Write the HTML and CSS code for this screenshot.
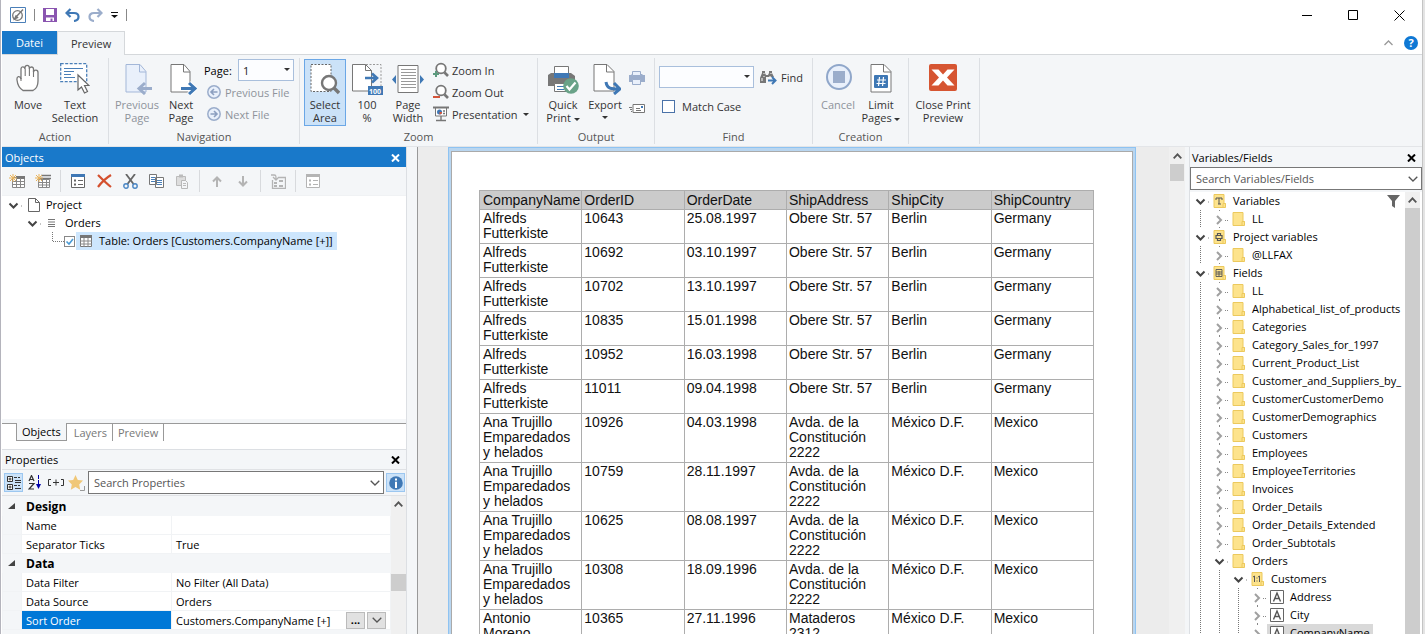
FILE: index.html
```html
<!DOCTYPE html>
<html lang="en">
<head>
<meta charset="utf-8">
<title>Print Preview</title>
<link rel="stylesheet" href="styles.css">
</head>
<body>
<svg class="defs" aria-hidden="true">
  <symbol id="open" viewBox="0 0 19 18"><path d="M5.5 7.5l4 4 4-4" fill="none" stroke="#444" stroke-width="2"/><path d="M17 10h2" stroke="#888" stroke-dasharray="1 1" stroke-width="1"/></symbol>
  <symbol id="shut" viewBox="0 0 19 18"><path d="M7 6l4 4-4 4" fill="none" stroke="#a0a0a0" stroke-width="2"/><path d="M9.500 0v1M9.500 17v1M15 10.500h1M17 10.500h1" stroke="#888"/></symbol>
  <symbol id="guide" viewBox="0 0 19 18"><path d="M9.500 0v18" stroke="#777" stroke-dasharray="1 1"/></symbol>
  <symbol id="elbow" viewBox="0 0 22 18"><path d="M10.500 0v10M11 9.500h11" fill="none" stroke="#777" stroke-dasharray="1 1"/></symbol>
  <symbol id="folder" viewBox="0 0 13 14"><path d="M.5.500h10v9h1.500v4H.5z" fill="#fde38c" stroke="#ecc95d"/><path d="M9.500 13V9.500H12" fill="none" stroke="#ecc95d"/></symbol>
  <symbol id="field" viewBox="0 0 14 14"><path d="M.5.500h13v13H.5z" fill="#fff" stroke="#666"/><path d="M3.500 11.500L7 3l3.500 8.500M4.700 8.500h4.600" fill="none" stroke="#555" stroke-width="1.400"/></symbol>
  <symbol id="grid" viewBox="0 0 12 12"><path d="M.5.500h11v11H.5z" fill="#fff" stroke="#777"/><path d="M0 0h12v3H0z" fill="#777"/><path d="M0 6h12M0 9h12M4 3v9M8 3v9" stroke="#888"/></symbol>
  <symbol id="lens" viewBox="0 0 16 16"><circle cx="8" cy="6.500" r="4.800" fill="#fff" stroke="#777" stroke-width="1.800"/><path d="M11.500 10.500L15 14" stroke="#777" stroke-width="2.600"/></symbol>
  <symbol id="cross" viewBox="0 0 9 8"><path d="M1 0.500l7 7M8 .5l-7 7" stroke="currentColor" stroke-width="2"/></symbol>
  <symbol id="down" viewBox="0 0 10 6"><path d="M.700.700L5 5 9.300.700" fill="none" stroke="currentColor" stroke-width="1.300"/></symbol>
  <symbol id="tri" viewBox="0 0 6 3"><path d="M0 0h6L3 3z" fill="currentColor"/></symbol>
  <symbol id="plist" viewBox="0 0 14 14"><path d="M.5.500h13v13H.5z" fill="#fff" stroke="currentColor"/><path d="M3 5.500h2v2H3zM3 9.500h2v2H3z" fill="currentColor"/><path d="M7 6.500h5M7 10.500h5" stroke="currentColor"/></symbol>
</svg>

<header class="titlebar">
  <svg class="app" width="16" height="16" viewBox="0 0 16 16"><path d="M.5.500h15v15H.5z" fill="#fff" stroke="#4a7fb8"/><circle cx="7.500" cy="8.500" r="4.800" fill="none" stroke="#777" stroke-width="1.300"/><path d="M5.500 10.500L13 2.500M4.500 12L6 9l1.500 1.500z" fill="#777" stroke="#777" stroke-width="1.400"/></svg>
  <i class="bar"></i>
  <button class="qa" aria-label="Save"><svg width="14" height="14" viewBox="0 0 14 14"><path d="M0 0h14v14H0z" fill="#8a55b0"/><path d="M3 1h8v6H3zM3 9.500h8V13H3z" fill="#fff"/><path d="M7.500 10.500h2V13h-2z" fill="#8a55b0"/></svg></button>
  <button class="qa" aria-label="Undo"><svg width="15" height="14" viewBox="0 0 15 14"><path d="M5.500 1L1.500 5l4 4M2 5h7c6 0 6 7.500 0 8" fill="none" stroke="#3f78b5" stroke-width="2.200"/></svg></button>
  <button class="qa" aria-label="Redo"><svg width="15" height="14" viewBox="0 0 15 14"><path d="M9.500 1l4 4-4 4M13 5H6c-6 0-6 7.500 0 8" fill="none" stroke="#9badcb" stroke-width="2.200"/></svg></button>
  <button class="qa small" aria-label="Customize"><svg width="7" height="6" viewBox="0 0 7 6"><path d="M0 .5h7" stroke="#111"/><path d="M0 3h7L3.500 6z" fill="#111"/></svg></button>
  <i class="bar"></i>
  <div class="winbtns">
    <button aria-label="Minimize"><svg width="10" height="11"><path d="M0 5.500h10" stroke="#000"/></svg></button>
    <button aria-label="Maximize"><svg width="10" height="10"><path d="M.5.500h9v9h-9z" fill="none" stroke="#000"/></svg></button>
    <button aria-label="Close"><svg width="11" height="11"><path d="M.5.500l10 10M10.500.500l-10 10" stroke="#000"/></svg></button>
  </div>
</header>

<nav class="tabs">
  <button class="tab file">Datei</button>
  <button class="tab current">Preview</button>
  <div class="tabend">
    <button aria-label="Collapse ribbon"><svg width="9" height="6"><path d="M.5 5l4-4 4 4" fill="none" stroke="#999" stroke-width="1.300"/></svg></button>
    <button class="help" aria-label="Help">?</button>
  </div>
</nav>

<section class="ribbon">
  <div class="group g-action">
    <div class="items">
      <button class="big w44"><svg width="24" height="32" viewBox="0 0 24 32"><path d="M7 27.500C3 25 1.500 22 1 17c-.5-4 3-4.500 4-1V6c0-2.800 3.700-2.800 4 0V4.500c.3-2.800 4-2.800 4.300 0V6c.3-2.700 4-2.700 4.200 0v3c.5-2.500 4.500-2.500 4.500.500V18c0 5-2 8-5 9.500z" fill="#fff" stroke="#777" stroke-width="1.300"/><path d="M5 15v3M9.200 6v7M13.400 6v7M17.500 8v6" stroke="#777" stroke-width="1.100"/></svg>Move</button>
      <button class="big w50"><svg width="30" height="32" viewBox="0 0 30 32"><path d="M.7.700h26v18H.7z" fill="#fff" stroke="#4a7fb8" stroke-width="1.300" stroke-dasharray="3 1.500"/><path d="M4 5.500h19M4 8.500h10M4 11.500h7M4 14.500h11" stroke="#4a7fb8"/><path d="M18 12v15l3.500-3 3 6 3-1.500-3-6h4.500z" fill="#fff" stroke="#666" stroke-width="1.200"/></svg>Text<br>Selection</button>
    </div>
    <h2>Action</h2>
  </div>
  <div class="group g-nav">
    <div class="items">
      <button class="big w48 off"><svg width="32" height="32" viewBox="-4 0 32 32"><path d="M1 1.500h14l6 7V29H1z" fill="#e9f0fb" stroke="#a3b7d8"/><path d="M14.500 1.500V9H21" fill="none" stroke="#a3b7d8"/><path d="M27 25.500H15M20 20l-6 5.500 6 5.500" fill="none" stroke="#9badcb" stroke-width="3"/></svg>Previous<br>Page</button>
      <button class="big w40"><svg width="32" height="32" viewBox="-4 0 32 32"><path d="M2 1.500h13l6 7V29H2z" fill="#fff" stroke="#777"/><path d="M14.500 1.500V9H21" fill="none" stroke="#777"/><path d="M12 25.500h13M20 20l6 5.500-6 5.500" fill="none" stroke="#fff" stroke-width="5"/><path d="M12 25.500h13M20 20l6 5.500-6 5.500" fill="none" stroke="#3f78b5" stroke-width="3"/></svg>Next<br>Page</button>
      <div class="stack">
        <div class="line"><label class="pagelabel" for="page">Page:</label><span class="combo w56"><select id="page"><option>1</option></select><svg width="6" height="3"><use href="#tri"/></svg></span></div>
        <button class="line off ml3"><svg width="14" height="14" viewBox="0 0 14 14"><circle cx="7" cy="7" r="6.200" fill="#e9f0fb" stroke="#9badcb" stroke-width="1.500"/><path d="M10.500 7h-6M7 4L4 7l3 3" fill="none" stroke="#8c9fc0" stroke-width="1.600"/></svg>Previous File</button>
        <button class="line off ml3"><svg width="14" height="14" viewBox="0 0 14 14"><circle cx="7" cy="7" r="6.200" fill="#e9f0fb" stroke="#9badcb" stroke-width="1.500"/><path d="M3.500 7h6M7 4l3 3-3 3" fill="none" stroke="#8c9fc0" stroke-width="1.600"/></svg>Next File</button>
      </div>
    </div>
    <h2>Navigation</h2>
  </div>
  <div class="group g-zoom">
    <div class="items">
      <button class="big w42 pressed"><svg width="30" height="32" viewBox="0 0 30 32"><path d="M1 1.500h20v27H1z" fill="#fff" stroke="#666" stroke-dasharray="2 1.500"/><circle cx="19" cy="20" r="7" fill="#fff" stroke="#777" stroke-width="2.400"/><path d="M24 25l5 5" stroke="#777" stroke-width="3.400"/></svg>Select<br>Area</button>
      <button class="big w42"><svg width="32" height="32" viewBox="0 0 32 32"><path d="M15 1.500h15v24H17" fill="none" stroke="#999" stroke-dasharray="2 1.500"/><path d="M1.500 1.500h13l6 6V28h-19z" fill="#fff" stroke="#777"/><path d="M14.500 1.500v6h6" fill="none" stroke="#777"/><path d="M14 15h11M21 10.500l5 4.500-5 4.500" fill="none" stroke="#3f78b5" stroke-width="2.600"/><path d="M17 23h15v9H17z" fill="#3f78b5"/><text x="18" y="30.500" class="tiny">100</text></svg>100<br>%</button>
      <button class="big w40"><svg width="32" height="32" viewBox="0 0 32 32"><path d="M6 2.500h20v27H6z" fill="#fff" stroke="#777"/><path d="M9 6.500h15M9 9.500h15M9 12.500h15M9 15.500h15M9 18.500h15M9 21.500h15M9 24.500h15" stroke="#999"/><path d="M4 12v9L0 16.500zM28 12v9l4-4.500z" fill="#3f78b5"/></svg>Page<br>Width</button>
      <div class="stack tools">
        <button class="line"><svg width="16" height="16" viewBox="0 0 16 16"><use href="#lens"/><path d="M3 9v6M0 12h6" stroke="#5c9a7e" stroke-width="2"/></svg>Zoom In</button>
        <button class="line"><svg width="16" height="16" viewBox="0 0 16 16"><use href="#lens"/><path d="M0 13h7" stroke="#d4553a" stroke-width="2"/></svg>Zoom Out</button>
        <button class="line"><svg width="16" height="16" viewBox="0 0 16 16"><path d="M0 1.500h16" stroke="#777" stroke-width="2"/><path d="M2.500 2h11v8h-11z" fill="#fff" stroke="#777"/><circle cx="6.500" cy="6" r="2.500" fill="#3f78b5"/><path d="M6.500 6h2.500a2.500 2.500 0 0 1-2.500 2.500z" fill="#d4553a"/><path d="M10 5h2M10 7.500h2M8 10v5M3 14.500h10" stroke="#777" stroke-width="1.400"/></svg>Presentation<svg class="drop" width="6" height="3"><use href="#tri"/></svg></button>
      </div>
    </div>
    <h2>Zoom</h2>
  </div>
  <div class="group g-out">
    <div class="items">
      <button class="big w42"><svg width="32" height="32" viewBox="0 0 32 32"><path d="M1 12l3-2h20l4 3v10H1z" fill="#777"/><path d="M7.500 3.500h14v8h-14z" fill="#fff" stroke="#777"/><path d="M7 10h15v5H7z" fill="#3f78b5"/><path d="M7.500 20.500h14v8h-14z" fill="#fff" stroke="#777"/><path d="M10 23.500h8M10 26.500h7" stroke="#3f78b5"/><circle cx="24" cy="23" r="7.800" fill="#69a288"/><path d="M19.500 23l3 3.500 6-7" fill="none" stroke="#fff" stroke-width="2.200"/></svg>Quick<br><span class="nb">Print <svg class="drop" width="6" height="3"><use href="#tri"/></svg></span></button>
      <button class="big w42"><svg width="32" height="32" viewBox="-4 0 32 32"><path d="M1 1.500h13l7 7V28H1z" fill="#fff" stroke="#777"/><path d="M13.500 1.500V9H21" fill="none" stroke="#777"/><path d="M13 19c1 7 6 7 12 7M21 20l6 6-6 5" fill="none" stroke="#3f78b5" stroke-width="3"/></svg>Export<br><svg class="drop mid" width="6" height="3"><use href="#tri"/></svg></button>
      <div class="stack pair">
        <button class="line off" aria-label="Print"><svg width="16" height="16" viewBox="0 0 16 16"><path d="M0 5h2l1-1h10l1 1h2v7H0z" fill="#9badcb"/><path d="M3.500 1.500h8v4h-8zM3.500 9.500h8v5h-8z" fill="#e9f0fb" stroke="#9badcb"/></svg></button>
        <button class="line" aria-label="Send"><svg width="16" height="12" viewBox="0 0 16 12"><path d="M4 2.500h11.500v8H4z" fill="#fff" stroke="#777"/><path d="M12 4h2v2h-2z" fill="#3f78b5"/><path d="M7 6.500h4M7 8.500h5M0 5.500h3M1 7.500h2M2 9.500h1" stroke="#777"/></svg></button>
      </div>
    </div>
    <h2>Output</h2>
  </div>
  <div class="group g-find">
    <div class="items findbox">
      <div class="findrow"><span class="combo w95"><select aria-label="Search text"><option></option></select><svg width="6" height="3"><use href="#tri"/></svg></span>
        <button class="line"><svg width="17" height="16" viewBox="0 0 17 16"><path d="M0 14V9l2-5V2h3v2l1 2h2l1-2V2h3v2l2 4H8V8H6v6z" fill="#777"/><path d="M2 9v3M3.500 4.500h1M10.500 4.500h1M4 7v1M10 7v1" stroke="#fff"/><path d="M8 11.500h7M12 8l3.500 3.500L12 15" fill="none" stroke="#3f78b5" stroke-width="2"/></svg>Find</button></div>
      <label class="match"><input type="checkbox">Match Case</label>
    </div>
    <h2>Find</h2>
  </div>
  <div class="group g-create">
    <div class="items">
      <button class="big w46 off"><svg width="28" height="32" viewBox="0 0 28 32"><circle cx="15" cy="14" r="12" fill="#e9f0fb" stroke="#90a7ca" stroke-width="2"/><path d="M9 8h12v12H9z" fill="#9badcb"/></svg>Cancel</button>
      <button class="big w40"><svg width="22" height="32" viewBox="0 0 22 32"><path d="M1 1.500h13l7 7V29H1z" fill="#fff" stroke="#777"/><path d="M13.500 1.500V9H21" fill="none" stroke="#777"/><rect x="4" y="12" width="14" height="13" rx="1" fill="#3f78b5"/><path d="M9.500 14l-1 9M13.500 14l-1 9M7 17h9M6.500 20.500h9" stroke="#fff" stroke-width="1.200"/></svg>Limit<br><span class="nb">Pages <svg class="drop" width="6" height="3"><use href="#tri"/></svg></span></button>
    </div>
    <h2>Creation</h2>
  </div>
  <div class="group g-close">
    <div class="items">
      <button class="big w60"><svg width="28" height="32" viewBox="0 0 28 32"><rect y="1" width="28" height="27" rx="2" fill="#d65532"/><path d="M2.500 6.500h7l4.500 5 4.500-5h7L18 14.500l7.500 8h-7L14 17.500l-4.500 5h-7l7.500-8z" fill="#fff"/></svg>Close Print<br>Preview</button>
    </div>
  </div>
</section>

<main class="work">
  <aside class="left">
    <section class="objects">
      <header class="ptitle active"><span>Objects</span><button aria-label="Close"><svg width="9" height="8"><use href="#cross"/></svg></button></header>
      <div class="otools">
        <button aria-label="New table"><svg width="16" height="14" viewBox="0 0 16 14"><path d="M3.500 3.500h12v10h-12z" fill="#fff" stroke="#888"/><path d="M7 2h9v3H7z" fill="#777"/><path d="M3 7.500h12M3 10.500h12M7.500 4v9M11.500 4v9" stroke="#888"/><path d="M4 0v8M0 4h8M1 1l6 6M7 1L1 7" stroke="#e9b35a"/></svg></button>
        <button aria-label="New object"><svg width="16" height="14" viewBox="0 0 16 14"><path d="M3.500 5.500h11v8h-11z" fill="#fff" stroke="#888"/><path d="M6 1.500h10M5 4.500h11" stroke="#777" stroke-width="1.500"/><path d="M3 8.500h12M3 11h12M7.500 5v9M11.500 5v9" stroke="#888"/><path d="M4 0v8M0 4h8M1 1l6 6M7 1L1 7" stroke="#e9b35a"/></svg></button>
        <i class="bar"></i>
        <button class="dark" aria-label="Properties"><svg width="14" height="14"><use href="#plist"/><path d="M0 0h14v3H0z" fill="#3f78b5"/></svg></button>
        <button aria-label="Delete"><svg width="15" height="14"><path d="M1 1c3 3 8 8 13 12M14 1C9 4 4 9 1 13" fill="none" stroke="#d4502e" stroke-width="2.200"/></svg></button>
        <button aria-label="Cut"><svg width="15" height="15"><path d="M3 0l7.500 10M12 0L4.500 10" stroke="#666" stroke-width="1.800"/><circle cx="3" cy="12" r="2.200" fill="none" stroke="#4a86c4" stroke-width="1.400"/><circle cx="12" cy="12" r="2.200" fill="none" stroke="#4a86c4" stroke-width="1.400"/></svg></button>
        <button aria-label="Copy"><svg width="15" height="14"><path d="M.5.500h7v10h-7zM6.500 3.500h8v10h-8z" fill="#fff" stroke="#777"/><path d="M2 3.500h4M2 5.500h4M2 7.500h4M8 6.500h5M8 8.500h5M8 10.500h5" stroke="#4a7fb8"/></svg></button>
        <button aria-label="Paste"><svg width="13" height="15"><path d="M.5 2.500h9v9h-9z" fill="#ddd" stroke="#bbb"/><path d="M3 .5h4v3H3z" fill="#bbb"/><path d="M5.500 6.500h4l2 2v6h-6z" fill="#f4f5f7" stroke="#b8b8b8"/><path d="M7 9.500h3M7 11.500h3" stroke="#bbb"/></svg></button>
        <i class="bar"></i>
        <button aria-label="Move up"><svg width="10" height="11"><path d="M5 11V2M1 5.500L5 1.500l4 4" fill="none" stroke="#b4b4b4" stroke-width="2"/></svg></button>
        <button aria-label="Move down"><svg width="10" height="11"><path d="M5 0v9M1 5.500l4 4 4-4" fill="none" stroke="#b4b4b4" stroke-width="2"/></svg></button>
        <i class="bar"></i>
        <button aria-label="Insert"><svg width="16" height="15"><path d="M1 1h3c2 0 2 1 2 4M3 3l3 3 3-3M2.500 6v8.500h13v-11H9" fill="none" stroke="#b4b4b4" stroke-width="1.300"/><path d="M4 8h3v2H4zM4 11h3v2H4zM9 6h4v2H9zM9 11h4v2H9z" fill="#b4b4b4"/></svg></button>
        <i class="bar"></i>
        <button class="pale" aria-label="Details"><svg width="14" height="14"><use href="#plist"/><path d="M0 0h14v3H0z" fill="#b4b4b4"/></svg></button>
      </div>
      <ul class="tree otree">
        <li><svg class="c"><use href="#open"/></svg><svg class="doc" width="12" height="14"><path d="M.5.500h7l4 4v9H.5z" fill="#fff" stroke="#666"/><path d="M7.500.500v4h4" fill="none" stroke="#666"/></svg><span>Project</span></li>
        <li><i class="pad"></i><svg class="c"><use href="#open"/></svg><svg class="lines" width="7" height="8"><path d="M0 .5h7M0 3h7M0 5.500h7M0 7.500h7" stroke="#777"/></svg><span>Orders</span></li>
        <li><i class="pad"></i><i class="pad"></i><svg class="c e"><use href="#elbow"/></svg><b class="check"><input type="checkbox" checked id="t1"><svg width="11" height="11"><path d="M2.500 5.500l2.500 2.500 4-5" fill="none" stroke="#4a9ad4" stroke-width="1.600"/></svg></b><label class="sel" for="t1"><svg width="12" height="12"><use href="#grid"/></svg>Table: Orders [Customers.CompanyName [+]]</label></li>
      </ul>
      <div class="btabs"><button class="on">Objects</button><button>Layers</button><button>Preview</button></div>
    </section>
    <section class="props">
      <header class="ptitle"><span>Properties</span><button aria-label="Close"><svg width="9" height="8"><use href="#cross"/></svg></button></header>
      <div class="ptools">
        <button class="lit" aria-label="Categorized"><svg width="14" height="14"><path d="M.5.500h5v5h-5zM.5 8.500h5v5h-5z" fill="#fff" stroke="#333"/><path d="M1.500 3h3M3 1.500v3M1.500 11h3M3 9.500v3M7 1.500h3M11 1.500h2M8 4.500h6M8 6.500h6M7 9.500h3M11 9.500h2M8 12.500h6" stroke="#333"/></svg></button>
        <button aria-label="Sort alphabetically"><svg width="14" height="15"><path d="M1 6l2.500-5.500L6 6M2 4.500h3M1 8.500h5l-5 5.500h5" fill="none" stroke="#333" stroke-width="1.200"/><path d="M10.500 0v10" stroke="#00a" stroke-dasharray="4 1"/><path d="M8 9h5l-2.500 5z" fill="#00a"/></svg></button>
        <button aria-label="Expand all"><svg width="16" height="7"><path d="M3 .5H.5v6H3M13 .5h2.500v6H13M5 3.500h6M8 .5v6" fill="none" stroke="#333"/></svg></button>
        <button aria-label="Favorites"><svg width="17" height="16"><path d="M7.500 0l2.300 5 5.200.600-3.800 3.800 1 5.300-4.700-2.600L2.800 14.700l1-5.300L0 5.600 5.200 5z" fill="#f0c777"/><path d="M16.500 11v4.500H12" fill="none" stroke="#999"/></svg></button>
        <div class="search"><input type="text" placeholder="Search Properties" aria-label="Search Properties"><svg width="10" height="6"><use href="#down"/></svg></div>
        <button class="lit" aria-label="Info"><svg width="14" height="14"><circle cx="7" cy="7" r="6.800" fill="#3f78b5"/><path d="M7 2.500v2M7 5.800V12" stroke="#fff" stroke-width="2"/></svg></button>
      </div>
      <div class="pbody">
        <table class="ptable">
          <tr class="cat"><td class="mk"><svg width="7" height="6"><path d="M7 0v6H0z" fill="#444"/></svg></td><th class="k">Design</th><td></td></tr>
          <tr><td class="mk"></td><td class="k">Name</td><td></td></tr>
          <tr><td class="mk"></td><td class="k">Separator Ticks</td><td>True</td></tr>
          <tr class="cat"><td class="mk"><svg width="7" height="6"><path d="M7 0v6H0z" fill="#444"/></svg></td><th class="k">Data</th><td></td></tr>
          <tr><td class="mk"></td><td class="k">Data Filter</td><td>No Filter (All Data)</td></tr>
          <tr><td class="mk"></td><td class="k">Data Source</td><td>Orders</td></tr>
          <tr class="chosen"><td class="mk"></td><td class="k">Sort Order</td><td><div class="edit"><span>Customers.CompanyName [+]</span><button>...</button><button aria-label="Open list"><svg width="10" height="6"><use href="#down"/></svg></button></div></td></tr>
        </table>
        <div class="scroll"><svg class="up" width="9" height="6"><path d="M.7 5.300l3.800-4 3.800 4" fill="none" stroke="#555" stroke-width="1.800"/></svg><i class="thumb low"></i></div>
      </div>
    </section>
  </aside>

  <section class="canvas">
    <div class="sheetframe">
      <div class="sheet">
        <table class="report">
          <thead><tr><th>CompanyName</th><th>OrderID</th><th>OrderDate</th><th>ShipAddress</th><th>ShipCity</th><th>ShipCountry</th></tr></thead>
          <tbody>
            <tr><td>Alfreds Futterkiste</td><td>10643</td><td>25.08.1997</td><td>Obere Str. 57</td><td>Berlin</td><td>Germany</td></tr>
            <tr><td>Alfreds Futterkiste</td><td>10692</td><td>03.10.1997</td><td>Obere Str. 57</td><td>Berlin</td><td>Germany</td></tr>
            <tr><td>Alfreds Futterkiste</td><td>10702</td><td>13.10.1997</td><td>Obere Str. 57</td><td>Berlin</td><td>Germany</td></tr>
            <tr><td>Alfreds Futterkiste</td><td>10835</td><td>15.01.1998</td><td>Obere Str. 57</td><td>Berlin</td><td>Germany</td></tr>
            <tr><td>Alfreds Futterkiste</td><td>10952</td><td>16.03.1998</td><td>Obere Str. 57</td><td>Berlin</td><td>Germany</td></tr>
            <tr><td>Alfreds Futterkiste</td><td>11011</td><td>09.04.1998</td><td>Obere Str. 57</td><td>Berlin</td><td>Germany</td></tr>
            <tr><td>Ana Trujillo Emparedados y helados</td><td>10926</td><td>04.03.1998</td><td>Avda. de la Constitución 2222</td><td>México D.F.</td><td>Mexico</td></tr>
            <tr><td>Ana Trujillo Emparedados y helados</td><td>10759</td><td>28.11.1997</td><td>Avda. de la Constitución 2222</td><td>México D.F.</td><td>Mexico</td></tr>
            <tr><td>Ana Trujillo Emparedados y helados</td><td>10625</td><td>08.08.1997</td><td>Avda. de la Constitución 2222</td><td>México D.F.</td><td>Mexico</td></tr>
            <tr><td>Ana Trujillo Emparedados y helados</td><td>10308</td><td>18.09.1996</td><td>Avda. de la Constitución 2222</td><td>México D.F.</td><td>Mexico</td></tr>
            <tr><td>Antonio Moreno</td><td>10365</td><td>27.11.1996</td><td>Mataderos 2312</td><td>México D.F.</td><td>Mexico</td></tr>
          </tbody>
        </table>
      </div>
    </div>
    <div class="scroll main"><svg class="up" width="9" height="6"><path d="M.7 5.300l3.800-4 3.800 4" fill="none" stroke="#555" stroke-width="1.800"/></svg><i class="thumb"></i></div>
  </section>

  <aside class="right">
    <header class="ptitle"><span>Variables/Fields</span><button aria-label="Close"><svg width="9" height="8"><use href="#cross"/></svg></button></header>
    <div class="search"><input type="text" placeholder="Search Variables/Fields" aria-label="Search Variables/Fields"><svg width="10" height="6"><use href="#down"/></svg></div>
    <div class="vbody">
      <ul class="tree vtree">
        <li><svg class="c"><use href="#open"/></svg><svg class="f"><use href="#folder"/><path d="M3 4h6M6 4v6M3 4v2M9 4v2M5 10h3" stroke="#555" stroke-width="1"/></svg><span>Variables</span><svg class="filter" width="13" height="13"><path d="M0 0h13L8 6v7l-3-2V6z" fill="#666"/></svg></li>
        <li><svg class="c"><use href="#guide"/></svg><svg class="c"><use href="#shut"/></svg><svg class="f"><use href="#folder"/></svg><span>LL</span></li>
        <li><svg class="c"><use href="#open"/></svg><svg class="f"><use href="#folder"/><path d="M3 5.500h6v3H3zM4.500 5.500v-2h3v2M4.500 8v2.500h3V8" fill="none" stroke="#555" stroke-width="1.200"/></svg><span>Project variables</span></li>
        <li><svg class="c"><use href="#guide"/></svg><svg class="c"><use href="#shut"/></svg><svg class="f"><use href="#folder"/></svg><span>@LLFAX</span></li>
        <li><svg class="c"><use href="#open"/></svg><svg class="f"><use href="#folder"/><path d="M3 3.500h6v7H3zM3 6h6M3 8h6M6 5v5" fill="none" stroke="#555" stroke-width=".9"/></svg><span>Fields</span></li>
        <li><svg class="c"><use href="#guide"/></svg><svg class="c"><use href="#shut"/></svg><svg class="f"><use href="#folder"/></svg><span>LL</span></li>
        <li><svg class="c"><use href="#guide"/></svg><svg class="c"><use href="#shut"/></svg><svg class="f"><use href="#folder"/></svg><span>Alphabetical_list_of_products</span></li>
        <li><svg class="c"><use href="#guide"/></svg><svg class="c"><use href="#shut"/></svg><svg class="f"><use href="#folder"/></svg><span>Categories</span></li>
        <li><svg class="c"><use href="#guide"/></svg><svg class="c"><use href="#shut"/></svg><svg class="f"><use href="#folder"/></svg><span>Category_Sales_for_1997</span></li>
        <li><svg class="c"><use href="#guide"/></svg><svg class="c"><use href="#shut"/></svg><svg class="f"><use href="#folder"/></svg><span>Current_Product_List</span></li>
        <li><svg class="c"><use href="#guide"/></svg><svg class="c"><use href="#shut"/></svg><svg class="f"><use href="#folder"/></svg><span>Customer_and_Suppliers_by_</span></li>
        <li><svg class="c"><use href="#guide"/></svg><svg class="c"><use href="#shut"/></svg><svg class="f"><use href="#folder"/></svg><span>CustomerCustomerDemo</span></li>
        <li><svg class="c"><use href="#guide"/></svg><svg class="c"><use href="#shut"/></svg><svg class="f"><use href="#folder"/></svg><span>CustomerDemographics</span></li>
        <li><svg class="c"><use href="#guide"/></svg><svg class="c"><use href="#shut"/></svg><svg class="f"><use href="#folder"/></svg><span>Customers</span></li>
        <li><svg class="c"><use href="#guide"/></svg><svg class="c"><use href="#shut"/></svg><svg class="f"><use href="#folder"/></svg><span>Employees</span></li>
        <li><svg class="c"><use href="#guide"/></svg><svg class="c"><use href="#shut"/></svg><svg class="f"><use href="#folder"/></svg><span>EmployeeTerritories</span></li>
        <li><svg class="c"><use href="#guide"/></svg><svg class="c"><use href="#shut"/></svg><svg class="f"><use href="#folder"/></svg><span>Invoices</span></li>
        <li><svg class="c"><use href="#guide"/></svg><svg class="c"><use href="#shut"/></svg><svg class="f"><use href="#folder"/></svg><span>Order_Details</span></li>
        <li><svg class="c"><use href="#guide"/></svg><svg class="c"><use href="#shut"/></svg><svg class="f"><use href="#folder"/></svg><span>Order_Details_Extended</span></li>
        <li><svg class="c"><use href="#guide"/></svg><svg class="c"><use href="#shut"/></svg><svg class="f"><use href="#folder"/></svg><span>Order_Subtotals</span></li>
        <li><svg class="c"><use href="#guide"/></svg><svg class="c"><use href="#open"/></svg><svg class="f"><use href="#folder"/></svg><span>Orders</span></li>
        <li><svg class="c"><use href="#guide"/></svg><svg class="c"><use href="#guide"/></svg><svg class="c"><use href="#open"/></svg><svg class="f"><use href="#folder"/><path d="M3.500 4v6M8.500 4v6M2 5l1.500-1M7 5l1.500-1M6 5.500v1M6 8.500v1" stroke="#555"/></svg><span>Customers</span></li>
        <li><svg class="c"><use href="#guide"/></svg><svg class="c"><use href="#guide"/></svg><svg class="c"><use href="#guide"/></svg><svg class="c"><use href="#shut"/></svg><svg class="f"><use href="#field"/></svg><span>Address</span></li>
        <li><svg class="c"><use href="#guide"/></svg><svg class="c"><use href="#guide"/></svg><svg class="c"><use href="#guide"/></svg><svg class="c"><use href="#shut"/></svg><svg class="f"><use href="#field"/></svg><span>City</span></li>
        <li><svg class="c"><use href="#guide"/></svg><svg class="c"><use href="#guide"/></svg><svg class="c"><use href="#guide"/></svg><svg class="c"><use href="#shut"/></svg><b class="hot"><svg class="f"><use href="#field"/></svg><span>CompanyName</span></b></li>
      </ul>
      <div class="scroll"><svg class="up" width="9" height="6"><path d="M.7 5.300l3.800-4 3.800 4" fill="none" stroke="#555" stroke-width="1.800"/></svg><i class="thumb long"></i></div>
    </div>
  </aside>
</main>
</body>
</html>
```
FILE: styles.css
```css
* { box-sizing: border-box; }
html { height: 100%; }
body {
  margin: 0; height: 100vh; overflow: hidden;
  display: flex; flex-direction: column;
  padding: 0 3px 0 2px;
  background: linear-gradient(to right, #b4b4bc 0 1px, #fff 1px calc(100% - 3px), #c4c4c4 calc(100% - 3px) calc(100% - 2px), #e4e4e4 calc(100% - 2px));
  font: 11px/18px "Open Sans", "Noto Sans", sans-serif; color: #000;
}
.defs { position: absolute; width: 0; height: 0; }
button, input, select { font: inherit; color: inherit; margin: 0; padding: 0; border: 0; background: none; }
svg { flex: none; display: block; }
h2 { margin: 0; }

.titlebar { flex: none; height: 31px; display: flex; align-items: center; gap: 8px; padding: 0 0 1px 8px; background: #fff; }
.bar { width: 1px; height: 12px; background: #888; }
.qa { display: flex; }
.winbtns { margin-left: auto; display: flex; }
.winbtns button { width: 46px; height: 30px; display: grid; place-items: center; }

.tabs { flex: none; height: 24px; display: flex; background: #fff; border-bottom: 1px solid #d5d8db; }
.tab { height: 24px; padding: 0 13px; text-align: center; }
.file { height: 23px; padding: 0 14px; background: #1979ca; color: #fff; }
.current { background: #f4f6f8; border: 1px solid #d5d8db; border-bottom: 0; color: #333; }
.tabend { margin-left: auto; padding-right: 4px; display: flex; align-items: center; gap: 11px; }
.help { width: 14px; height: 14px; border-radius: 7px; background: #0f78d4; color: #fff; font-weight: 700; line-height: 14px; }

.ribbon { flex: none; height: 91px; display: flex; background: #f4f6f8; color: #333; line-height: 13px; }
.group { margin-top: 3px; height: 86px; display: flex; flex-direction: column; border-right: 1px solid #dcdfe3; }
.group h2 { height: 14px; font: inherit; text-align: center; color: #555; }
.items { height: 72px; display: flex; align-items: flex-start; padding: 1px 4px 0; }
.big { height: 67px; padding-top: 4px; display: flex; flex-direction: column; align-items: center; text-align: center; white-space: nowrap; }
.big > svg:first-child { margin-bottom: 3px; }
.off { color: #8e939b; }
.pressed { background: #cbe2f8; box-shadow: inset 0 0 0 1px #6ba7e6; }
.w40 { width: 40px; } .w42 { width: 42px; } .w44 { width: 44px; } .w46 { width: 46px; } .w48 { width: 48px; } .w50 { width: 50px; } .w60 { width: 60px; }
.g-action { width: 107px; } .g-nav { width: 191px; } .g-zoom { width: 238px; } .g-out { width: 117px; }
.g-find { width: 158px; } .g-create { width: 96px; } .g-close { width: 71px; }
.g-create .items { padding-left: 2px; }
.stack { display: flex; flex-direction: column; margin-left: 3px; white-space: nowrap; }
.line { height: 22px; display: flex; align-items: center; gap: 4px; }
.ml3 { margin-left: 3px; }
.stack .combo { margin-left: 2px; }
.tools { margin-left: 5px; }
.tools .line { gap: 3px; }
.pagelabel { color: #000; width: 28px; }
.combo { position: relative; height: 22px; }
.combo select { width: 100%; height: 22px; appearance: none; border: 1px solid #a9bfdc; background: #fcfdff; padding-left: 4px; color: #222; }
.combo svg { position: absolute; right: 4px; top: 9px; pointer-events: none; }
.w56 { width: 56px; } .w95 { width: 95px; }
.drop { display: inline-block; vertical-align: middle; }
.line .drop { margin-left: 2px; }
.mid { margin-top: 5px; }
.pair { padding-top: 8px; gap: 8px; }
.findbox { flex-direction: column; padding-top: 8px; gap: 11px; }
.findrow { display: flex; align-items: center; gap: 6px; }
.match { display: flex; align-items: center; gap: 7px; padding-left: 3px; height: 15px; }
.match input { appearance: none; width: 13px; height: 13px; border: 1px solid #4a72a8; background: #fff; }
.tiny { font: 700 7px "Open Sans", sans-serif; fill: #fff; }

.work { flex: 1; min-height: 0; display: flex; border-top: 1px solid #e3e5e8; background: #f4f6f8; }
.left { flex: none; width: 405px; display: flex; flex-direction: column; border-right: 1px solid #dcdfe3; }
.objects { flex: 1; min-height: 0; display: flex; flex-direction: column; background: #fff; }
.ptitle { flex: none; height: 20px; display: flex; justify-content: space-between; align-items: center; padding: 1px 6px 0 3px; }
.ptitle button { display: flex; }
.active { background: #1979ca; color: #fff; }
.otools { flex: none; height: 29px; display: flex; align-items: center; gap: 10px; padding-left: 7px; background: #f4f6f8; border-bottom: 1px solid #f0f2f4; }
.otools button { display: grid; place-items: center; width: 16px; }
.otools .bar { height: 22px; margin: 0 -1px; background: #d8dadd; }
.dark { color: #666; } .pale { color: #b4b4b4; }

.tree { list-style: none; margin: 0; padding: 0; }
.tree li { height: 18px; display: flex; align-items: center; white-space: nowrap; }
.c { width: 19px; height: 18px; }
.e { width: 22px; }
.pad { width: 19px; flex: none; }
.otree { flex: 1; padding-left: 2px; }
.otree span { margin-left: 6px; }
.doc { margin-left: 5px; } .lines { margin: 0 4px 0 6px; }
.check { position: relative; display: flex; }
.check input { appearance: none; width: 11px; height: 11px; border: 1px solid #888; background: #fff; }
.check svg { position: absolute; inset: 0; pointer-events: none; }
.sel { display: flex; align-items: center; gap: 7px; margin-left: 1px; height: 18px; padding: 0 4px; background: #cde6fd; }
.btabs { flex: none; height: 30px; padding: 0 0 8px 14px; display: flex; border-top: 4px solid #f4f6f8; box-shadow: inset 0 1px #9a9a9a; color: #777; }
.btabs button { padding: 0 5px; line-height: 17px; border-right: 1px solid #999; }
.btabs .on { margin-right: 2px; background: #f4f6f8; color: #000; border: 1px solid #999; border-top: 0; }

.props { flex: none; height: 185px; display: flex; flex-direction: column; border-top: 1px solid #dcdfe3; }
.props .ptitle { height: 19px; }
.ptools { flex: none; height: 27px; display: flex; align-items: center; gap: 2px; padding: 0 1px 0 2px; border-top: 1px solid #e0e2e5; border-bottom: 1px solid #e0e2e5; }
.ptools button { display: grid; place-items: center; height: 19px; width: 19px; flex: none; }
.lit { background: #cbe2f8; box-shadow: inset 0 0 0 1px #9cc7f0; }
.search { position: relative; flex: 1; }
.search input { width: 100%; height: 23px; border: 1px solid #777; background: #fff; padding: 0 22px 0 5px; display: block; }
.search input::placeholder { color: #555; opacity: 1; }
.search svg { position: absolute; right: 4px; top: 9px; color: #555; }
.pbody { flex: 1; min-height: 0; display: flex; overflow: hidden; }
.ptable { flex: 1; border-collapse: collapse; table-layout: fixed; height: 133px; }
.ptable td, .ptable th { height: 19px; padding: 0 4px; line-height: 17px; text-align: left; background: #fff; border: 1px solid #f1f3f5; white-space: nowrap; }
.ptable .mk { width: 19px; padding: 0 3px; background: #f4f6f8; }
.ptable .mk svg { margin-left: 2px; }
.ptable .k { width: 150px; }
.ptable .cat td, .ptable .cat th { background: #f4f6f8; border-color: #f4f6f8; }
.ptable .cat th { font-size: 12px; }
.ptable .chosen .k { background: #0078d7; color: #fff; }
.edit { display: flex; gap: 2px; height: 17px; }
.edit span { flex: 1; }
.edit button { width: 19px; background: #e1e1e1; border: 1px solid #bbb; display: grid; place-items: center; font-weight: 700; line-height: 12px; }
.edit svg { color: #555; }
.scroll { flex: none; width: 15px; display: flex; flex-direction: column; align-items: center; background: #f0f0f0; }
.scroll .up { margin: 5px 0; }
.thumb { width: 15px; height: 17px; background: #cdcdcd; }
.low { margin-top: 62px; }
.long { flex: 1; }

.canvas { flex: 1; min-width: 0; margin-left: 10px; display: flex; background: #ececec; border-left: 1px solid #999; overflow: hidden; }
.sheetframe { flex: 1; margin: 0 33px 0 30px; padding: 3px 2px 0; background: #b9d6f0; border: 1px solid #8ec3f2; border-bottom: 0; }
.sheet { height: 100%; background: #fff; border: 1px solid #aaa; border-bottom: 0; padding: 38px 38px 0 27px; }
.report { width: 100%; table-layout: fixed; border-collapse: collapse; font: 14px/15px "Liberation Sans", Arial, sans-serif; color: #111; }
.report th { padding: 2px 0 1px 3px; background: #cbcbcb; text-align: left; font-weight: 400; border: 1px solid #adadad; }
.report td { padding: 1px 3px 2px; vertical-align: top; border: 1px solid #adadad; }
.report td + td, .report th + th { padding-left: 2px; }
.main { width: 16px; }
.main .thumb { width: 14px; }
.main .up { margin: 6px 0 5px; }

.right { flex: none; width: 233px; margin-left: 4px; display: flex; flex-direction: column; border-left: 1px solid #dcdfe3; }
.right > .ptitle { padding-left: 2px; }
.right .search { flex: none; }
.vbody { flex: 1; min-height: 0; display: flex; background: #fff; border-top: 2px solid #f4f6f8; padding-right: 2px; }
.vtree { flex: 1; min-width: 0; overflow: hidden; padding-left: 1px; }
.f { width: 14px; height: 14px; margin: 0 6px 0 3px; }
.filter { margin: 0 5px 0 auto; }
.hot { display: flex; align-items: center; font-weight: 400; background: #d9d9d9; height: 18px; padding-right: 3px; }
```
